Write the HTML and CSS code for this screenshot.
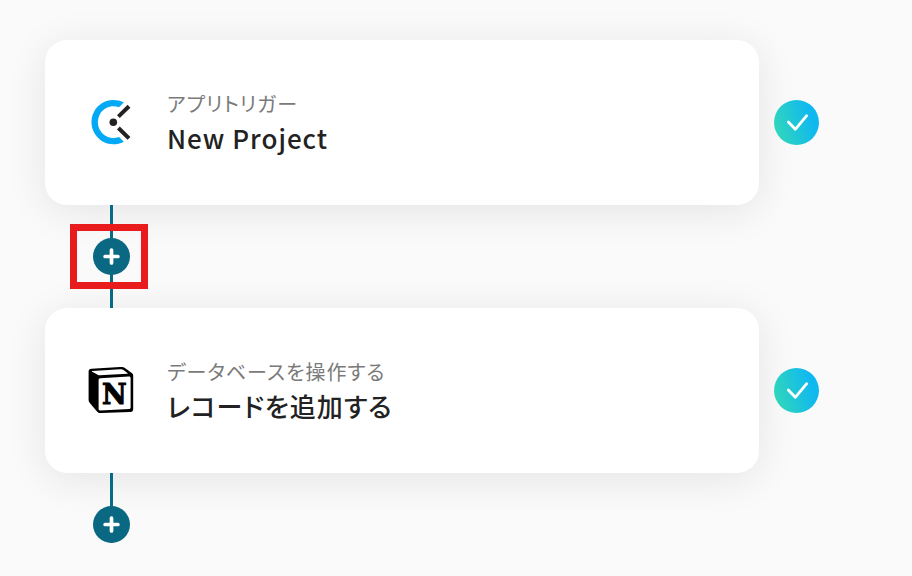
FILE: index.html
```html
<!DOCTYPE html>
<html lang="ja">
<head>
  <meta charset="UTF-8" />
  <meta name="viewport" content="width=device-width, initial-scale=1" />
  <title>New Project</title>
  <link rel="stylesheet" href="styles.css">
</head>
<body>
  <main class="flow">
    <!-- トリガー -->
    <section class="step">
      <div class="card">
        <svg class="logo" viewBox="0 0 46 46" aria-hidden="true">
          <path d="M35.8 3.5A22 22.2 0 1 0 35.8 42.7L31 38A15.7 15.9 0 1 1 31 8.2Z" fill="#03a9f4" />
          <path d="M30.4 17.6L41 7.2M30.4 29L41 39.4" fill="none" stroke="#222" stroke-width="4" />
          <circle cx="25.3" cy="23.3" r="3.8" fill="#222" />
        </svg>
        <div class="text">
          <p class="label">アプリトリガー</p>
          <h2 class="title">New Project</h2>
        </div>
      </div>
      <svg class="status" viewBox="0 0 45 45" role="img" aria-label="完了">
        <defs>
          <linearGradient id="done" x1="0" y1="0.65" x2="1" y2="0.35">
            <stop offset="0.05" stop-color="#2fd5bd" />
            <stop offset="0.85" stop-color="#10b8f0" />
          </linearGradient>
        </defs>
        <circle cx="22.5" cy="22.5" r="22.5" fill="url(#done)" />
        <path d="M14.3 22L21.3 29.3L32.7 15.7" fill="none" stroke="#fff" stroke-width="2.8" stroke-linecap="round" stroke-linejoin="round" />
      </svg>
    </section>

    <div class="connector">
      <button class="add" type="button" aria-label="追加">
        <svg viewBox="0 0 16 16" aria-hidden="true"><path d="M8 2V14M2 8H14" /></svg>
      </button>
      <span class="highlight"></span>
    </div>

    <!-- アクション -->
    <section class="step">
      <div class="card">
        <svg class="logo" viewBox="0 0 46 46" aria-hidden="true">
          <path d="M3.5 1.8L32 .1C34.8 0 35.8 .4 37.6 1.6L43.8 6C45 6.9 45.2 7.6 45.2 9V42C45.2 44 44.4 45 42.2 45.1L12.6 46C10.9 46 9.9 45.7 8.8 44.3L2 36.2C1 34.9 .6 33.9 .6 32.4V4.8C.6 3 1.5 1.9 3.5 1.8Z" fill="#000" />
          <path d="M4.3 4L32 2.3C33.7 2.2 34.5 2.4 35.8 3.3L39.4 5.9C40 6.4 39.9 6.6 39.2 6.7L11.8 8.3C10.5 8.4 9.9 8.1 8.9 7.3L4.2 4.7C3.6 4.3 3.8 4.1 4.3 4Z" fill="#fff" />
          <path d="M12.3 11.2L40.7 9.6C42 9.5 42.6 10 42.6 11.2V40.2C42.6 41.3 42.1 41.9 40.9 42L12.5 43.4C11.2 43.5 10.6 43 10.6 41.7V13C10.6 11.8 11.1 11.3 12.3 11.2Z" fill="#fff" />
          <text class="logo-letter" x="26.4" y="37" text-anchor="middle">N</text>
        </svg>
        <div class="text">
          <p class="label">データベースを操作する</p>
          <h2 class="title">レコードを追加する</h2>
        </div>
      </div>
      <svg class="status" viewBox="0 0 45 45" role="img" aria-label="完了">
        <circle cx="22.5" cy="22.5" r="22.5" fill="url(#done)" />
        <path d="M14.3 22L21.3 29.3L32.7 15.7" fill="none" stroke="#fff" stroke-width="2.8" stroke-linecap="round" stroke-linejoin="round" />
      </svg>
    </section>

    <div class="connector last">
      <button class="add" type="button" aria-label="追加">
        <svg viewBox="0 0 16 16" aria-hidden="true"><path d="M8 2V14M2 8H14" /></svg>
      </button>
    </div>
  </main>
</body>
</html>
```
FILE: styles.css
```css
* {
  box-sizing: border-box;
}

body {
  margin: 0;
  background: #fafafa;
  color: #222;
  font-family: "Noto Sans CJK JP", "Noto Sans", sans-serif;
}

.flow {
  padding: 40px 93px 32px 45px;
}

.step {
  display: flex;
  align-items: center;
  gap: 15px;
}

.card {
  flex: 1;
  display: flex;
  align-items: center;
  gap: 33px;
  padding: 48px 43px 49px;
  background: #fff;
  border-radius: 22px;
  box-shadow: 0 6px 40px rgba(0, 0, 0, 0.09);
}

.logo {
  flex: none;
  width: 46px;
  height: 46px;
}

.logo-letter {
  font-family: "DejaVu Serif", serif;
  font-size: 27px;
  font-weight: bold;
  stroke: #000;
  stroke-width: 1px;
}

.text {
  font-feature-settings: "palt";
}

.label {
  margin: 0;
  color: #7a7a7a;
  font-size: 20px;
  font-weight: 400;
  line-height: 32px;
  letter-spacing: 1px;
}

.title {
  margin: 0;
  font-size: 26px;
  font-weight: 500;
  line-height: 36px;
  letter-spacing: 1px;
}

.status {
  flex: none;
  width: 45px;
  height: 45px;
}

.connector {
  position: relative;
  display: flex;
  align-items: center;
  width: 37px;
  height: 103px;
  margin-left: 48px;
  background: linear-gradient(#076b85, #076b85) center / 3px 100% no-repeat;
}

.connector.last {
  height: 70px;
  align-items: flex-end;
}

.add {
  display: flex;
  align-items: center;
  justify-content: center;
  width: 37px;
  height: 37px;
  padding: 0;
  background: #0b6883;
  border: none;
  border-radius: 50%;
  cursor: pointer;
}

.add svg {
  width: 17px;
  height: 17px;
  fill: none;
  stroke: #fff;
  stroke-width: 3.5;
  stroke-linecap: round;
}

.highlight {
  position: absolute;
  inset: 19px -18px 19px -23px;
  border: 7px solid #e81c1c;
  pointer-events: none;
}
```
